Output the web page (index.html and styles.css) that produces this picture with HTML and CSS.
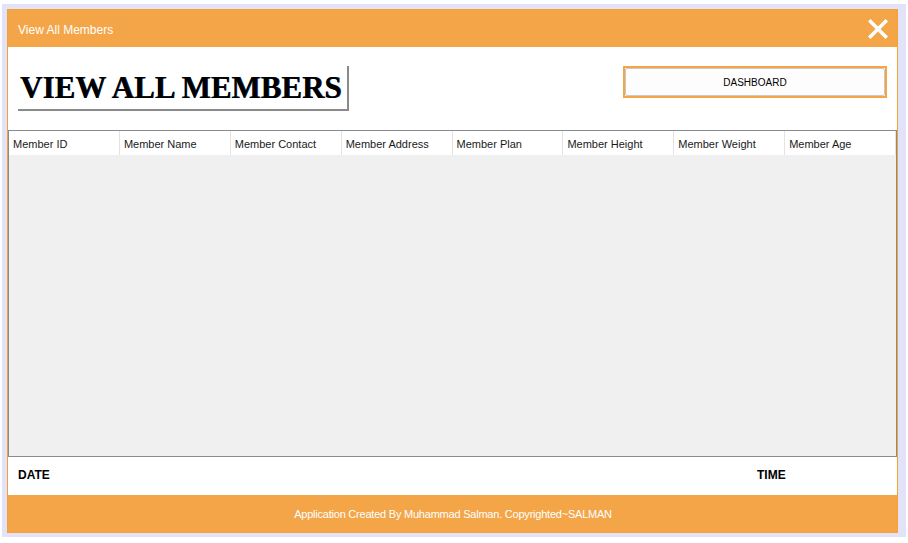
FILE: index.html
```html
<!DOCTYPE html>
<html>
<head>
<meta charset="utf-8">
<link rel="stylesheet" href="styles.css">
</head>
<body>
<div class="frame">
  <div class="window">
    <div class="titlebar">
      <span class="title">View All Members</span>
      <svg class="close" width="20" height="20" viewBox="0 0 20 20"><path d="M2.5 2.5 L17.5 17.5 M17.5 2.5 L2.5 17.5" stroke="#fff" stroke-width="3.6" stroke-linecap="square" fill="none"/></svg>
    </div>
    <div class="top">
      <div class="heading">VIEW ALL MEMBERS</div>
      <div class="dash-wrap"><button class="dash">DASHBOARD</button></div>
    </div>
    <div class="grid">
      <div class="grid-head">
        <div class="col">Member ID</div>
        <div class="col">Member Name</div>
        <div class="col">Member Contact</div>
        <div class="col">Member Address</div>
        <div class="col">Member Plan</div>
        <div class="col">Member Height</div>
        <div class="col">Member Weight</div>
        <div class="col">Member Age</div>
      </div>
    </div>
    <div class="datetime">
      <span class="date">DATE</span>
      <span class="time">TIME</span>
    </div>
    <div class="footer">Application Created By Muhammad Salman. Copyrighted~SALMAN</div>
  </div>
</div>
</body>
</html>
```
FILE: styles.css
```css
html, body {
  margin: 0;
  padding: 0;
  background: #ffffff;
}
body {
  font-family: "Liberation Sans", Arial, sans-serif;
}
.frame {
  margin: 4px 0 0 2px;
  width: 904px;
  height: 533px;
  box-sizing: border-box;
  padding: 5px 8px 4px 5px;
  background: #e2e2f9;
}
.window {
  width: 891px;
  height: 524px;
  box-sizing: border-box;
  border: 1px solid #f5a330;
  background: #ffffff;
  display: flex;
  flex-direction: column;
}
.titlebar {
  height: 37px;
  flex: none;
  background: #f3a548;
  display: flex;
  align-items: center;
  justify-content: space-between;
  padding: 0 9px 0 10px;
}
.title {
  color: #ffffff;
  font-size: 12px;
  margin-top: 3px;
}
.close {
  display: block;
  margin-top: 1px;
}
.top {
  height: 83px;
  flex: none;
  display: flex;
  justify-content: space-between;
  align-items: flex-start;
  padding: 19px 10px 0 10px;
  box-sizing: border-box;
}
.heading {
  width: 327px;
  height: 43px;
  border-right: 2px solid #8a8a8a;
  border-bottom: 2px solid #8a8a8a;
  font-family: "Liberation Serif", "Times New Roman", serif;
  font-weight: bold;
  font-size: 31px;
  letter-spacing: 0;
  line-height: 44px;
  padding-left: 2px;
  color: #000000;
  white-space: nowrap;
  text-shadow: 0.6px 0 0 #1a3a6a;
}
.dash-wrap {
  width: 264px;
  height: 32px;
  box-sizing: border-box;
  border: 2px solid #f3a548;
  display: flex;
}
.dash {
  flex: 1;
  margin: 0;
  border: 1px solid #c9c9c9;
  border-radius: 2px;
  background: #fdfdfd;
  font-family: "Liberation Sans", Arial, sans-serif;
  font-size: 10px;
  color: #000000;
  padding: 0;
}
.grid {
  height: 327px;
  flex: none;
  box-sizing: border-box;
  border: 1px solid #888b94;
  background: #f0f0f0;
}
.grid-head {
  display: flex;
  height: 24px;
}
.col {
  width: 111px;
  box-sizing: border-box;
  background: #ffffff;
  border-right: 1px solid #e3e3e3;
  font-size: 11px;
  color: #1a1a1a;
  padding: 7px 0 0 4px;
  white-space: nowrap;
}
.datetime {
  height: 38px;
  flex: none;
  display: flex;
  align-items: center;
  font-size: 12px;
  font-weight: bold;
  color: #000000;
  padding-left: 10px;
}
.date {
  width: 739px;
  margin-top: -2px;
}
.time {
  margin-top: -2px;
}
.footer {
  flex: 1;
  background: #f3a548;
  color: #ffffff;
  font-size: 11px;
  letter-spacing: -0.22px;
  display: flex;
  align-items: center;
  justify-content: center;
  padding-left: 1px;
}
```
